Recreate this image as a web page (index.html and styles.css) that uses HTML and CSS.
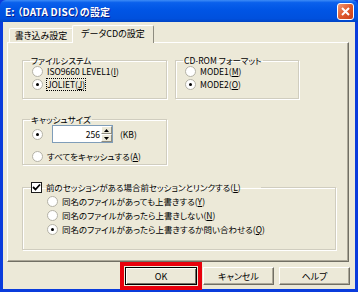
FILE: index.html
```html
<!DOCTYPE html>
<html>
<head>
<meta charset="utf-8">
<link rel="stylesheet" href="styles.css">
</head>
<body>
  <div class="window">
    <div class="titlebar">
      <span class="title">E: （DATA DISC）の設定</span>
      <span class="close">
        <svg width="9" height="9" viewBox="0 0 9 9"><path d="M1 1L8 8M8 1L1 8" stroke="#fff" stroke-width="2"/></svg>
      </span>
    </div>

    <div class="client">
      <div class="tabs">
        <div class="tab">書き込み設定</div>
        <div class="tab active">データCDの設定</div>
      </div>

      <div class="panel">
        <div class="row">
          <fieldset class="group fs-system">
            <legend>ファイルシステム</legend>
            <div class="opt"><span class="radio"></span>ISO9660 LEVEL1(<u>I</u>)</div>
            <div class="opt"><span class="radio on"></span><span class="focus">JOLIET(<u>J</u>)</span></div>
          </fieldset>
          <fieldset class="group fs-format">
            <legend>CD-ROM フォーマット</legend>
            <div class="opt"><span class="radio"></span>MODE1(<u>M</u>)</div>
            <div class="opt"><span class="radio on"></span>MODE2(<u>O</u>)</div>
          </fieldset>
        </div>

        <fieldset class="group fs-cache">
          <legend>キャッシュサイズ</legend>
          <div class="opt opt-spin">
            <span class="radio on"></span>
            <span class="spin">
              <span class="spin-value">256</span>
              <span class="spin-btns">
                <span class="spin-btn"><svg width="5" height="3" viewBox="0 0 5 3"><path d="M2.5 0L5 3H0Z" fill="#000"/></svg></span>
                <span class="spin-btn"><svg width="5" height="3" viewBox="0 0 5 3"><path d="M0 0H5L2.5 3Z" fill="#000"/></svg></span>
              </span>
            </span>
            <span class="unit">(KB)</span>
          </div>
          <div class="opt"><span class="radio"></span>すべてをキャッシュする(<u>A</u>)</div>
        </fieldset>

        <fieldset class="group fs-session">
          <legend><span class="check"><svg width="9" height="9" viewBox="0 0 9 9"><path d="M1 4L3.5 6.5L8 1.5" stroke="#000" stroke-width="1.8" fill="none"/></svg></span>前のセッションがある場合前セッションとリンクする(<u>L</u>)</legend>
          <div class="opt"><span class="radio"></span>同名のファイルがあっても上書きする(<u>Y</u>)</div>
          <div class="opt"><span class="radio"></span>同名のファイルがあったら上書きしない(<u>N</u>)</div>
          <div class="opt"><span class="radio on"></span>同名のファイルがあったら上書きするか問い合わせる(<u>Q</u>)</div>
        </fieldset>
      </div>

      <div class="buttons">
        <button class="btn default">OK</button>
        <button class="btn">キャンセル</button>
        <button class="btn">ヘルプ</button>
      </div>
    </div>
  </div>
</body>
</html>
```

FILE: styles.css
```css
body {
  margin: 0;
  padding: 0;
  font-family: "Noto Sans CJK JP", "Liberation Sans", sans-serif;
  font-size: 9px;
  font-feature-settings: "palt";
  color: #000;
}

.window {
  width: 358px;
  height: 292px;
  box-sizing: border-box;
  padding: 0 3px 3px;
  background: #0a3cdc;
  display: flex;
  flex-direction: column;
}

.titlebar {
  height: 22px;
  margin: 0 -3px;
  padding: 0 4px 0 5px;
  display: flex;
  align-items: center;
  justify-content: space-between;
  background: linear-gradient(#3d8cf6 0%, #0a60ec 12%, #0055e5 45%, #0050dd 85%, #0044c4 100%);
  border-radius: 6px 6px 0 0;
}

.title {
  color: #fff;
  font-weight: bold;
  font-size: 10px;
  text-shadow: 1px 1px #0a1e8c;
  letter-spacing: 0.2px;
}

.close {
  width: 15px;
  height: 15px;
  border: 1px solid #fff;
  border-radius: 3px;
  background: linear-gradient(135deg, #f09a78, #e05a2c 50%, #c8401a);
  display: flex;
  align-items: center;
  justify-content: center;
}

.client {
  flex: 1;
  background: #ece9d8;
  padding-top: 2px;
  display: flex;
  flex-direction: column;
}

.tabs {
  height: 18px;
  margin-left: 6px;
  display: flex;
  align-items: flex-end;
  position: relative;
  z-index: 1;
}

.tab {
  width: 64px;
  height: 14px;
  box-sizing: border-box;
  text-align: center;
  line-height: 13px;
  border: 1px solid #fff;
  border-right-color: #8e8c80;
  border-bottom: none;
  border-radius: 2px 2px 0 0;
  background: #ece9d8;
}

.tab.active {
  width: 82px;
  height: 18px;
  margin-bottom: -1px;
  margin-left: -1px;
  line-height: 15px;
}

.panel {
  height: 220px;
  box-sizing: border-box;
  margin: 0 6px 0 4px;
  padding: 11px 0 0 14px;
  font-size: 8.5px;
  border: 1px solid #fff;
  border-right-color: #716f64;
  border-bottom-color: #716f64;
  box-shadow: inset -1px -1px #aca899;
}

.row {
  display: flex;
  gap: 8px;
}

.group {
  margin: 0;
  padding: 0 0 0 9px;
  border: 1px solid #d0cdbf;
  box-shadow: 1px 1px #fff, inset 1px 1px #fff;
  min-width: 0;
  box-sizing: border-box;
}

.group legend {
  padding: 0 1px;
  margin-left: -2px;
  line-height: 12px;
}

.fs-system {
  width: 145px;
  height: 45px;
}

.fs-format {
  width: 124px;
  height: 45px;
}

.fs-cache {
  width: 145px;
  height: 52px;
  margin-top: 14px;
}

.fs-session {
  width: 314px;
  height: 69px;
  margin-top: 16px;
  padding-left: 24px;
}

.fs-session legend {
  width: 230px;
  box-sizing: border-box;
  display: flex;
  align-items: center;
  margin-left: -16px;
  padding: 0;
  line-height: 13px;
}

.opt {
  height: 13px;
  line-height: 13px;
  display: flex;
  align-items: center;
  white-space: nowrap;
}

.fs-system .opt:first-of-type,
.fs-format .opt:first-of-type {
  margin-top: -1px;
}

.fs-session .opt {
  height: 14px;
  line-height: 14px;
}

.radio {
  width: 9px;
  height: 9px;
  margin-right: 4px;
  flex: none;
  border: 1px solid #b4b2a6;
  border-radius: 50%;
  background: #fff;
  position: relative;
}

.radio.on::after {
  content: "";
  position: absolute;
  left: 3px;
  top: 3px;
  width: 3px;
  height: 3px;
  border-radius: 50%;
  background: #000;
}

.focus {
  line-height: 11px;
  outline: 1px dotted #000;
}

.check {
  width: 9px;
  height: 9px;
  margin-right: 4px;
  flex: none;
  border: 1px solid #1c1c1c;
  background: #fff;
  display: flex;
  align-items: center;
  justify-content: center;
}

.opt-spin {
  height: 18px;
  margin-bottom: 7px;
}

.spin {
  width: 61px;
  height: 18px;
  margin-left: 5px;
  box-sizing: border-box;
  border: 1px solid #7f9db9;
  background: #fff;
  display: flex;
}

.spin-value {
  flex: 1;
  text-align: right;
  line-height: 16px;
  padding-right: 1px;
}

.spin-btns {
  width: 11px;
  display: flex;
  flex-direction: column;
}

.spin-btn {
  flex: 1;
  display: flex;
  align-items: center;
  justify-content: center;
  background: #ece9d8;
  border: 1px solid #fff;
  border-right-color: #8e8c80;
  border-bottom-color: #8e8c80;
}

.unit {
  margin-left: 7px;
}

.buttons {
  display: flex;
  justify-content: flex-end;
  gap: 5px;
  margin-top: 5px;
  padding-right: 5px;
}

.btn {
  width: 71px;
  height: 18px;
  padding: 0;
  font-family: inherit;
  font-size: 9px;
  font-feature-settings: "palt";
  background: #ece9d8;
  border: 1px solid #fff;
  border-right-color: #716f64;
  border-bottom-color: #716f64;
  box-shadow: inset -1px -1px #aca899;
}

.btn.default {
  width: 72px;
  border: 1px solid #000;
  box-shadow: inset 1px 1px #fff, inset -1px -1px #716f64;
  outline: 4px solid #e8000c;
  outline-offset: 1px;
  margin-right: 1px;
}
```
